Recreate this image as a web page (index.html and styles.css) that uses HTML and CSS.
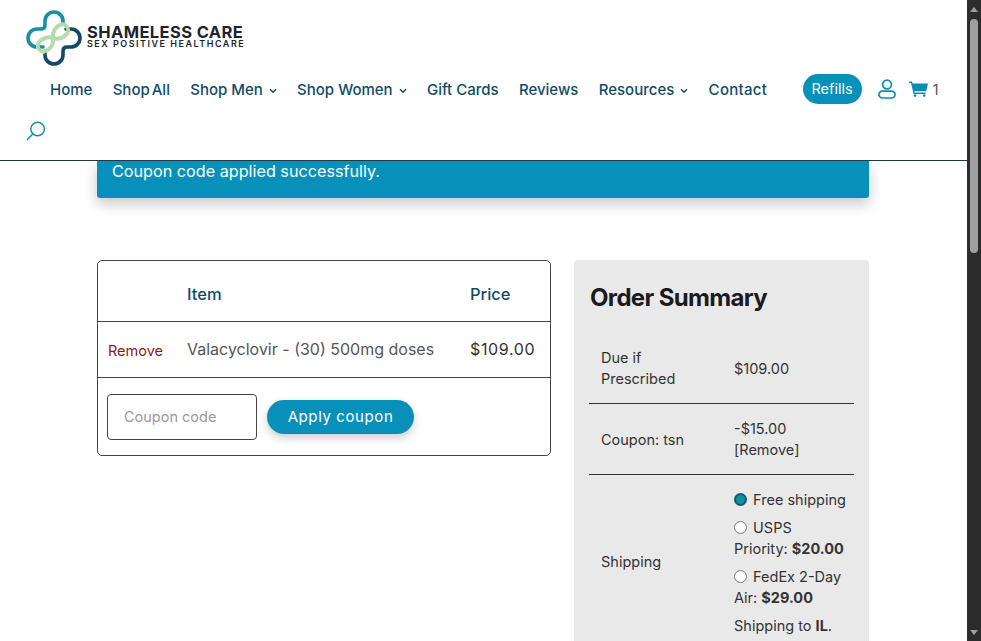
FILE: index.html
```html
<!DOCTYPE html>
<html lang="en">
<head>
    <meta charset="UTF-8">
    <meta name="viewport" content="width=device-width, initial-scale=1.0">
    <title>Checkout - Shameless Care</title>
    <link rel="stylesheet" href="styles.css">
</head>
<body>
    <div class="page">
        <header class="site-header">
            <a class="logo" href="#">
                <svg class="logo-mark" viewBox="0 0 56 56" width="56" height="56" fill="none" stroke-linecap="round">
                    <path d="M37 14V11A9 9 0 0 0 19 11V15Q19 19 15 19H11A9 9 0 0 0 11 37H17" stroke="#1b8ea3" stroke-width="3.6"/>
                    <path d="M40 19H45A9 9 0 0 1 45 37H41Q37 37 37 41V45A9 9 0 0 1 19 45V41" stroke="#14476b" stroke-width="3.6"/>
                    <path d="M27 28C22 20 9 20 9 28C9 36 22 36 27 28C32 20 45 20 45 28C45 36 32 36 27 28Z" stroke="#b8dbaa" stroke-width="4" transform="rotate(-40 27 28)"/>
                </svg>
                <span class="logo-text">
                    <span class="logo-name">SHAMELESS CARE</span>
                    <span class="logo-tag">SEX POSITIVE HEALTHCARE</span>
                </span>
            </a>
            <nav class="nav-row">
                <a href="#">Home</a>
                <a href="#" class="tight">Shop All</a>
                <a href="#" class="has-sub">Shop Men <svg class="chev" viewBox="0 0 8 6" width="8" height="6"><path d="M1 1.2L4 4.2L7 1.2"/></svg></a>
                <a href="#" class="has-sub">Shop Women <svg class="chev" viewBox="0 0 8 6" width="8" height="6"><path d="M1 1.2L4 4.2L7 1.2"/></svg></a>
                <a href="#">Gift Cards</a>
                <a href="#">Reviews</a>
                <a href="#" class="has-sub">Resources <svg class="chev" viewBox="0 0 8 6" width="8" height="6"><path d="M1 1.2L4 4.2L7 1.2"/></svg></a>
                <a href="#" class="contact">Contact</a>
                <a href="#" class="refills">Refills</a>
                <a href="#" class="user-link">
                    <svg viewBox="0 0 18 20" width="18" height="20" fill="none" stroke="#0a8db5" stroke-width="1.7">
                        <circle cx="9" cy="5.5" r="4.4"/>
                        <rect x="1" y="12.2" width="16" height="6.8" rx="3.4"/>
                    </svg>
                </a>
                <a href="#" class="cart-link">
                    <svg viewBox="0 0 19 16" width="19" height="16" fill="#0a8db5">
                        <path d="M0 0.6H3L3.6 2.6H19L17.2 10.2H5.4L5.8 11.6H16.6V13H4.6L2 1.9H0Z"/>
                        <circle cx="6" cy="14.6" r="1.3"/>
                        <circle cx="15.2" cy="14.6" r="1.3"/>
                    </svg>
                    <span class="cart-count">1</span>
                </a>
            </nav>
            <a href="#" class="search-link">
                <svg viewBox="0 0 20 20" width="20" height="20" fill="none" stroke="#0a8db5" stroke-width="1.4" stroke-linecap="round">
                    <circle cx="11.6" cy="8" r="6.8"/>
                    <path d="M6.8 13L1.4 18.6"/>
                </svg>
            </a>
        </header>

        <main class="content">
            <div class="notice">Coupon code applied successfully.</div>
            <div class="checkout">
                <div class="cart-box">
                    <table class="cart-table">
                        <tr class="cart-head">
                            <th class="col-remove"></th>
                            <th class="col-item">Item</th>
                            <th class="col-price">Price</th>
                        </tr>
                        <tr class="cart-line">
                            <td class="col-remove"><a href="#" class="remove">Remove</a></td>
                            <td class="col-item">Valacyclovir - (30) 500mg doses</td>
                            <td class="col-price">$109.00</td>
                        </tr>
                        <tr>
                            <td colspan="3" class="coupon-cell">
                                <div class="coupon-row">
                                    <input type="text" class="coupon-input" placeholder="Coupon code">
                                    <button type="button" class="coupon-btn">Apply coupon</button>
                                </div>
                            </td>
                        </tr>
                    </table>
                </div>
                <aside class="summary">
                    <h2>Order Summary</h2>
                    <table class="summary-table">
                        <tr class="row-due">
                            <td class="label">Due if Prescribed</td>
                            <td>$109.00</td>
                        </tr>
                        <tr class="row-coupon">
                            <td class="label">Coupon: tsn</td>
                            <td>-$15.00 <a href="#">[Remove]</a></td>
                        </tr>
                        <tr>
                            <td class="label">Shipping</td>
                            <td class="ship-cell">
                                <label class="ship-option"><input type="radio" name="ship" checked> Free shipping</label>
                                <label class="ship-option"><input type="radio" name="ship"> USPS Priority: <b>$20.00</b></label>
                                <label class="ship-option"><input type="radio" name="ship"> FedEx 2-Day Air: <b>$29.00</b></label>
                                <p class="ship-to">Shipping to <b>IL</b>.</p>
                            </td>
                        </tr>
                    </table>
                </aside>
            </div>
        </main>
    </div>

    <div class="scrollbar">
        <span class="arrow-up"></span>
        <span class="thumb"></span>
        <span class="arrow-down"></span>
    </div>
</body>
</html>
```

FILE: styles.css
```css
html, body {
    height: 100%;
}
body {
    margin: 0;
    display: flex;
    height: 641px;
    overflow: hidden;
    background: #fff;
    color: #333;
    font-family: Inter, "Liberation Sans", sans-serif;
    font-size: 15px;
}
a {
    color: inherit;
    text-decoration: none;
}
.page {
    width: 967px;
    height: 641px;
    overflow: hidden;
}

/* header */
.site-header {
    border-bottom: 1px solid #1d3b47;
    padding: 0 0 0 26px;
    display: flex;
    flex-direction: column;
    box-sizing: border-box;
    height: 161px;
}
.logo {
    display: flex;
    align-items: center;
    gap: 5px;
    margin-top: 10px;
    height: 56px;
}
.logo-text {
    display: flex;
    flex-direction: column;
    margin-top: -2px;
}
.logo-name {
    font-weight: 700;
    font-size: 16.5px;
    line-height: 14px;
    color: #1c2430;
    letter-spacing: 0.4px;
}
.logo-tag {
    font-weight: 600;
    font-size: 9px;
    line-height: 10px;
    color: #1c2430;
    letter-spacing: 1.5px;
}
.nav-row {
    display: flex;
    align-items: center;
    height: 30px;
    margin-top: 8px;
    padding-left: 24px;
    color: #0f4c66;
    font-size: 15px;
    font-weight: 500;
}
.nav-row > a {
    margin-right: 20.3px;
    white-space: nowrap;
}
.nav-row .tight {
    word-spacing: -2px;
}
.nav-row .contact {
    letter-spacing: 0.3px;
}
.chev {
    margin-left: 2px;
    fill: none;
    stroke: #0f4c66;
    stroke-width: 1.5;
    vertical-align: 1px;
}
.nav-row .refills {
    margin-left: 15px;
    margin-right: 16px;
    width: 59px;
    height: 30px;
    line-height: 30px;
    text-align: center;
    border-radius: 15px;
    background: #0791ba;
    color: #fff;
    font-size: 14.5px;
    font-weight: 400;
}
.nav-row .user-link {
    margin-right: 13px;
    height: 20px;
}
.nav-row .cart-link {
    margin-right: 0;
    display: flex;
    align-items: center;
    gap: 5px;
}
.cart-count {
    color: #555;
    font-weight: 400;
}
.search-link {
    display: block;
    width: 20px;
    height: 20px;
    margin-top: 17px;
}

/* page content, scrolled under the header */
.content {
    height: 480px;
    overflow: hidden;
    padding: 0 98px 0 97px;
}
.notice {
    height: 37px;
    line-height: 21px;
    padding-left: 15px;
    background: #0791ba;
    color: #fff;
    font-size: 16.2px;
    border-radius: 0 0 3px 3px;
    box-shadow: 0 6px 14px rgba(0, 0, 0, 0.22);
}
.checkout {
    display: flex;
    align-items: flex-start;
    gap: 23px;
    margin-top: 62px;
}

/* cart */
.cart-box {
    width: 454px;
    height: 196px;
    box-sizing: border-box;
    border: 1px solid #444;
    border-radius: 5px;
}
.cart-table {
    width: 100%;
    border-collapse: collapse;
    table-layout: fixed;
}
.cart-head {
    height: 60px;
}
.cart-head th {
    text-align: left;
    font-size: 16.5px;
    font-weight: 500;
    color: #0f4c66;
    padding: 6px 0 0;
}
.cart-line {
    height: 56px;
}
.cart-line td {
    border-top: 1px solid #444;
    border-bottom: 1px solid #444;
    padding: 0;
    font-size: 16px;
    color: #555;
}
.cart-table .col-remove {
    box-sizing: border-box;
    width: 89px;
    padding-left: 10px;
}
.cart-table .col-item {
    width: 283px;
}
.cart-line .col-price {
    color: #333;
    letter-spacing: 0.65px;
}
.remove {
    color: #8b1a13;
    font-size: 14.5px;
    position: relative;
    top: 1px;
}
.cart-table .coupon-cell {
    padding: 16px 9px 0;
}
.coupon-row {
    display: flex;
    align-items: center;
    gap: 10px;
}
.coupon-input {
    width: 150px;
    height: 46px;
    box-sizing: border-box;
    padding: 0 16px;
    border: 1px solid #444;
    border-radius: 4px;
    font-family: inherit;
    font-size: 14.5px;
}
.coupon-input::placeholder {
    color: #999;
}
.coupon-btn {
    width: 147px;
    height: 34px;
    border: none;
    border-radius: 17px;
    background: #0791ba;
    color: #fff;
    font-family: inherit;
    font-size: 15px;
    letter-spacing: 0.6px;
    box-shadow: 0 4px 10px rgba(0, 0, 0, 0.2);
}

/* order summary */
.summary {
    width: 295px;
    height: 500px;
    box-sizing: border-box;
    padding: 23px 15px 0;
    background: #e9e9ea;
    border-radius: 4px;
}
.summary h2 {
    margin: 0 0 21px;
    padding-left: 1px;
    font-size: 24px;
    line-height: 29px;
    font-weight: 700;
    color: #1b1b1f;
    letter-spacing: -0.65px;
}
.summary-table {
    width: 100%;
    border-collapse: collapse;
    table-layout: fixed;
    font-size: 14.5px;
    line-height: 21px;
}
.summary-table td {
    padding: 0 12px;
    vertical-align: middle;
}
.summary-table .label {
    width: 109px;
}
.row-due td, .row-coupon td {
    height: 70px;
    border-bottom: 1px solid #333;
}
.summary-table .ship-cell {
    padding: 14px 5px 12px 12px;
}
.ship-option {
    display: block;
    margin-bottom: 7px;
}
.ship-option input {
    appearance: none;
    box-sizing: border-box;
    width: 13px;
    height: 13px;
    margin: 0 2px 0 0;
    border: 1px solid #767676;
    border-radius: 50%;
    background: #fff;
    vertical-align: -1px;
}
.ship-option input:checked {
    border: 2px solid #14586e;
    background: #0a96a0;
}
.ship-to {
    margin: 0;
}

/* drawn scrollbar, the page is shown scrolled */
.scrollbar {
    width: 14px;
    height: 641px;
    background: #2c2c2c;
    display: flex;
    flex-direction: column;
    align-items: center;
}
.arrow-up {
    margin-top: 7px;
    border: 4px solid transparent;
    border-top: 0;
    border-bottom: 5px solid #a0a0a0;
}
.thumb {
    width: 8px;
    height: 234px;
    margin-top: 7px;
    background: #9f9f9f;
    border-radius: 4px;
}
.arrow-down {
    margin-top: auto;
    margin-bottom: 6px;
    border: 4px solid transparent;
    border-bottom: 0;
    border-top: 5px solid #a0a0a0;
}
```
